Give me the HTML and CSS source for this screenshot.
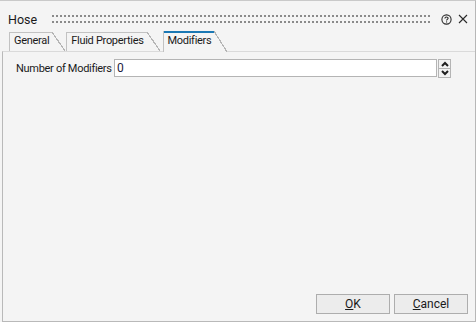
FILE: index.html
```html
<!DOCTYPE html>
<html>
<head>
<meta charset="utf-8">
<link rel="stylesheet" href="styles.css">
</head>
<body>
<div class="dialog">
  <div class="titlebar">
    <span class="title">Hose</span>
    <div class="grip"><i></i><i></i></div>
    <svg class="help" width="11" height="11" viewBox="0 0 11 11"><circle cx="5.5" cy="5.5" r="4.6" fill="none" stroke="#2a2a2a" stroke-width="1.1"/><path d="M3.9 4.4 C3.9 2.6 7.1 2.6 7.1 4.3 C7.1 5.4 5.5 5.4 5.5 6.6" fill="none" stroke="#2a2a2a" stroke-width="1.1"/><rect x="5" y="7.4" width="1.1" height="1.1" fill="#2a2a2a"/></svg>
    <svg class="close" width="10" height="10" viewBox="0 0 10 10"><path d="M1 1 L9 9 M9 1 L1 9" stroke="#2a2a2a" stroke-width="1.1"/></svg>
  </div>
  <div class="tabs">
    <div class="tab">General</div>
    <div class="tab">Fluid Properties</div>
    <div class="tab active">Modifiers</div>
  </div>
  <div class="panel">
    <div class="row">
      <span class="label">Number of Modifiers</span>
      <div class="field">0</div>
      <div class="spin">
        <div class="sbtn"><svg width="8" height="6" viewBox="0 0 8 6"><path d="M1 5 L4 2 L7 5" fill="none" stroke="#1e1e1e" stroke-width="2"/></svg></div>
        <div class="sbtn"><svg width="8" height="6" viewBox="0 0 8 6"><path d="M1 1 L4 4 L7 1" fill="none" stroke="#1e1e1e" stroke-width="2"/></svg></div>
      </div>
    </div>
    <div class="buttons">
      <div class="btn"><u>O</u>K</div>
      <div class="btn"><u>C</u>ancel</div>
    </div>
  </div>
</div>
</body>
</html>
```

FILE: styles.css
```css
html, body {
  margin: 0;
  padding: 0;
  background: #f4f4f4;
}
body {
  font-family: Roboto, "Liberation Sans", sans-serif;
  font-size: 11px;
  color: #1a1a1a;
}
.dialog {
  width: 476px;
  height: 322px;
  box-sizing: border-box;
  border-top: 1px solid #c9c9c9;
  border-right: 1px solid #b7b7b7;
  display: flex;
  flex-direction: column;
  background: #f4f4f4;
}
.titlebar {
  height: 30px;
  box-sizing: border-box;
  padding-top: 6px;
  display: flex;
  align-items: center;
}
.title {
  font-size: 12.5px;
  margin-left: 8px;
  width: 27px;
  color: #1a1a1a;
}
.grip {
  margin-left: 17px;
  width: 379px;
  display: flex;
  flex-direction: column;
  gap: 4px;
}
.grip i {
  display: block;
  height: 2px;
  background: radial-gradient(circle at 1px 1px, #8a8a8a 0.8px, transparent 1.3px) 0 0 / 4px 2px repeat-x;
}
.help {
  margin-left: 10px;
}
.close {
  margin-left: 6px;
}
.tabs {
  height: 20px;
  display: flex;
  align-items: flex-end;
  padding-left: 9px;
}
.tab {
  height: 19px;
  box-sizing: border-box;
  line-height: 18px;
  padding: 0 16px 0 4px;
  letter-spacing: -0.3px;
  border-left: 1px solid #c2c2c2;
  margin-right: 1px;
  background:
    linear-gradient(#c2c2c2, #c2c2c2) left top / calc(100% - 13px) 1px no-repeat,
    linear-gradient(to top right, transparent calc(50% - 0.6px), #b5b5b5 calc(50% - 0.6px), #b5b5b5 calc(50% + 0.6px), transparent calc(50% + 0.6px)) right top / 13px 100% no-repeat,
    #f4f4f4;
  white-space: nowrap;
}
.tab.active {
  height: 21px;
  margin-left: 2px;
  margin-bottom: -1px;
  line-height: 19px;
  position: relative;
  z-index: 1;
  background:
    linear-gradient(#1b78b4, #1b78b4) left top / calc(100% - 13px) 2px no-repeat,
    linear-gradient(to top right, transparent calc(50% - 0.6px), #b5b5b5 calc(50% - 0.6px), #b5b5b5 calc(50% + 0.6px), transparent calc(50% + 0.6px)) right top / 13px 100% no-repeat,
    #f4f4f4;
}
.panel {
  flex: 1;
  margin-left: 2px;
  border-left: 1px solid #b9b9b9;
  border-top: 1px solid #dadada;
  border-bottom: 1px solid #b9b9b9;
  display: flex;
  flex-direction: column;
}
.row {
  margin-top: 7px;
  padding: 0 24px 0 13px;
  display: flex;
  align-items: center;
  height: 18px;
}
.label {
  width: 98px;
  white-space: nowrap;
  letter-spacing: -0.3px;
}
.field {
  flex: 1;
  height: 18px;
  box-sizing: border-box;
  border: 1px solid #b4b4b4;
  background: #ffffff;
  padding-left: 2px;
  line-height: 16px;
  font-size: 12px;
  color: #1a1a40;
}
.spin {
  margin-left: 1px;
  display: flex;
  flex-direction: column;
  width: 13px;
  height: 19px;
}
.sbtn {
  flex: 1;
  box-sizing: border-box;
  border: 1px solid #b4b4b4;
  background: #f2f2f2;
  display: flex;
  align-items: center;
  justify-content: center;
}
.sbtn + .sbtn {
  border-top: none;
}
.buttons {
  margin-top: auto;
  display: flex;
  justify-content: flex-end;
  gap: 4px;
  padding: 0 7px 7px 0;
}
.btn {
  width: 74px;
  height: 20px;
  box-sizing: border-box;
  border: 1px solid #adadad;
  background: #ececec;
  display: flex;
  align-items: center;
  justify-content: center;
  font-size: 12px;
  color: #1a1a1a;
}
.btn u {
  text-decoration-thickness: 1px;
  text-underline-offset: 1px;
}
```
